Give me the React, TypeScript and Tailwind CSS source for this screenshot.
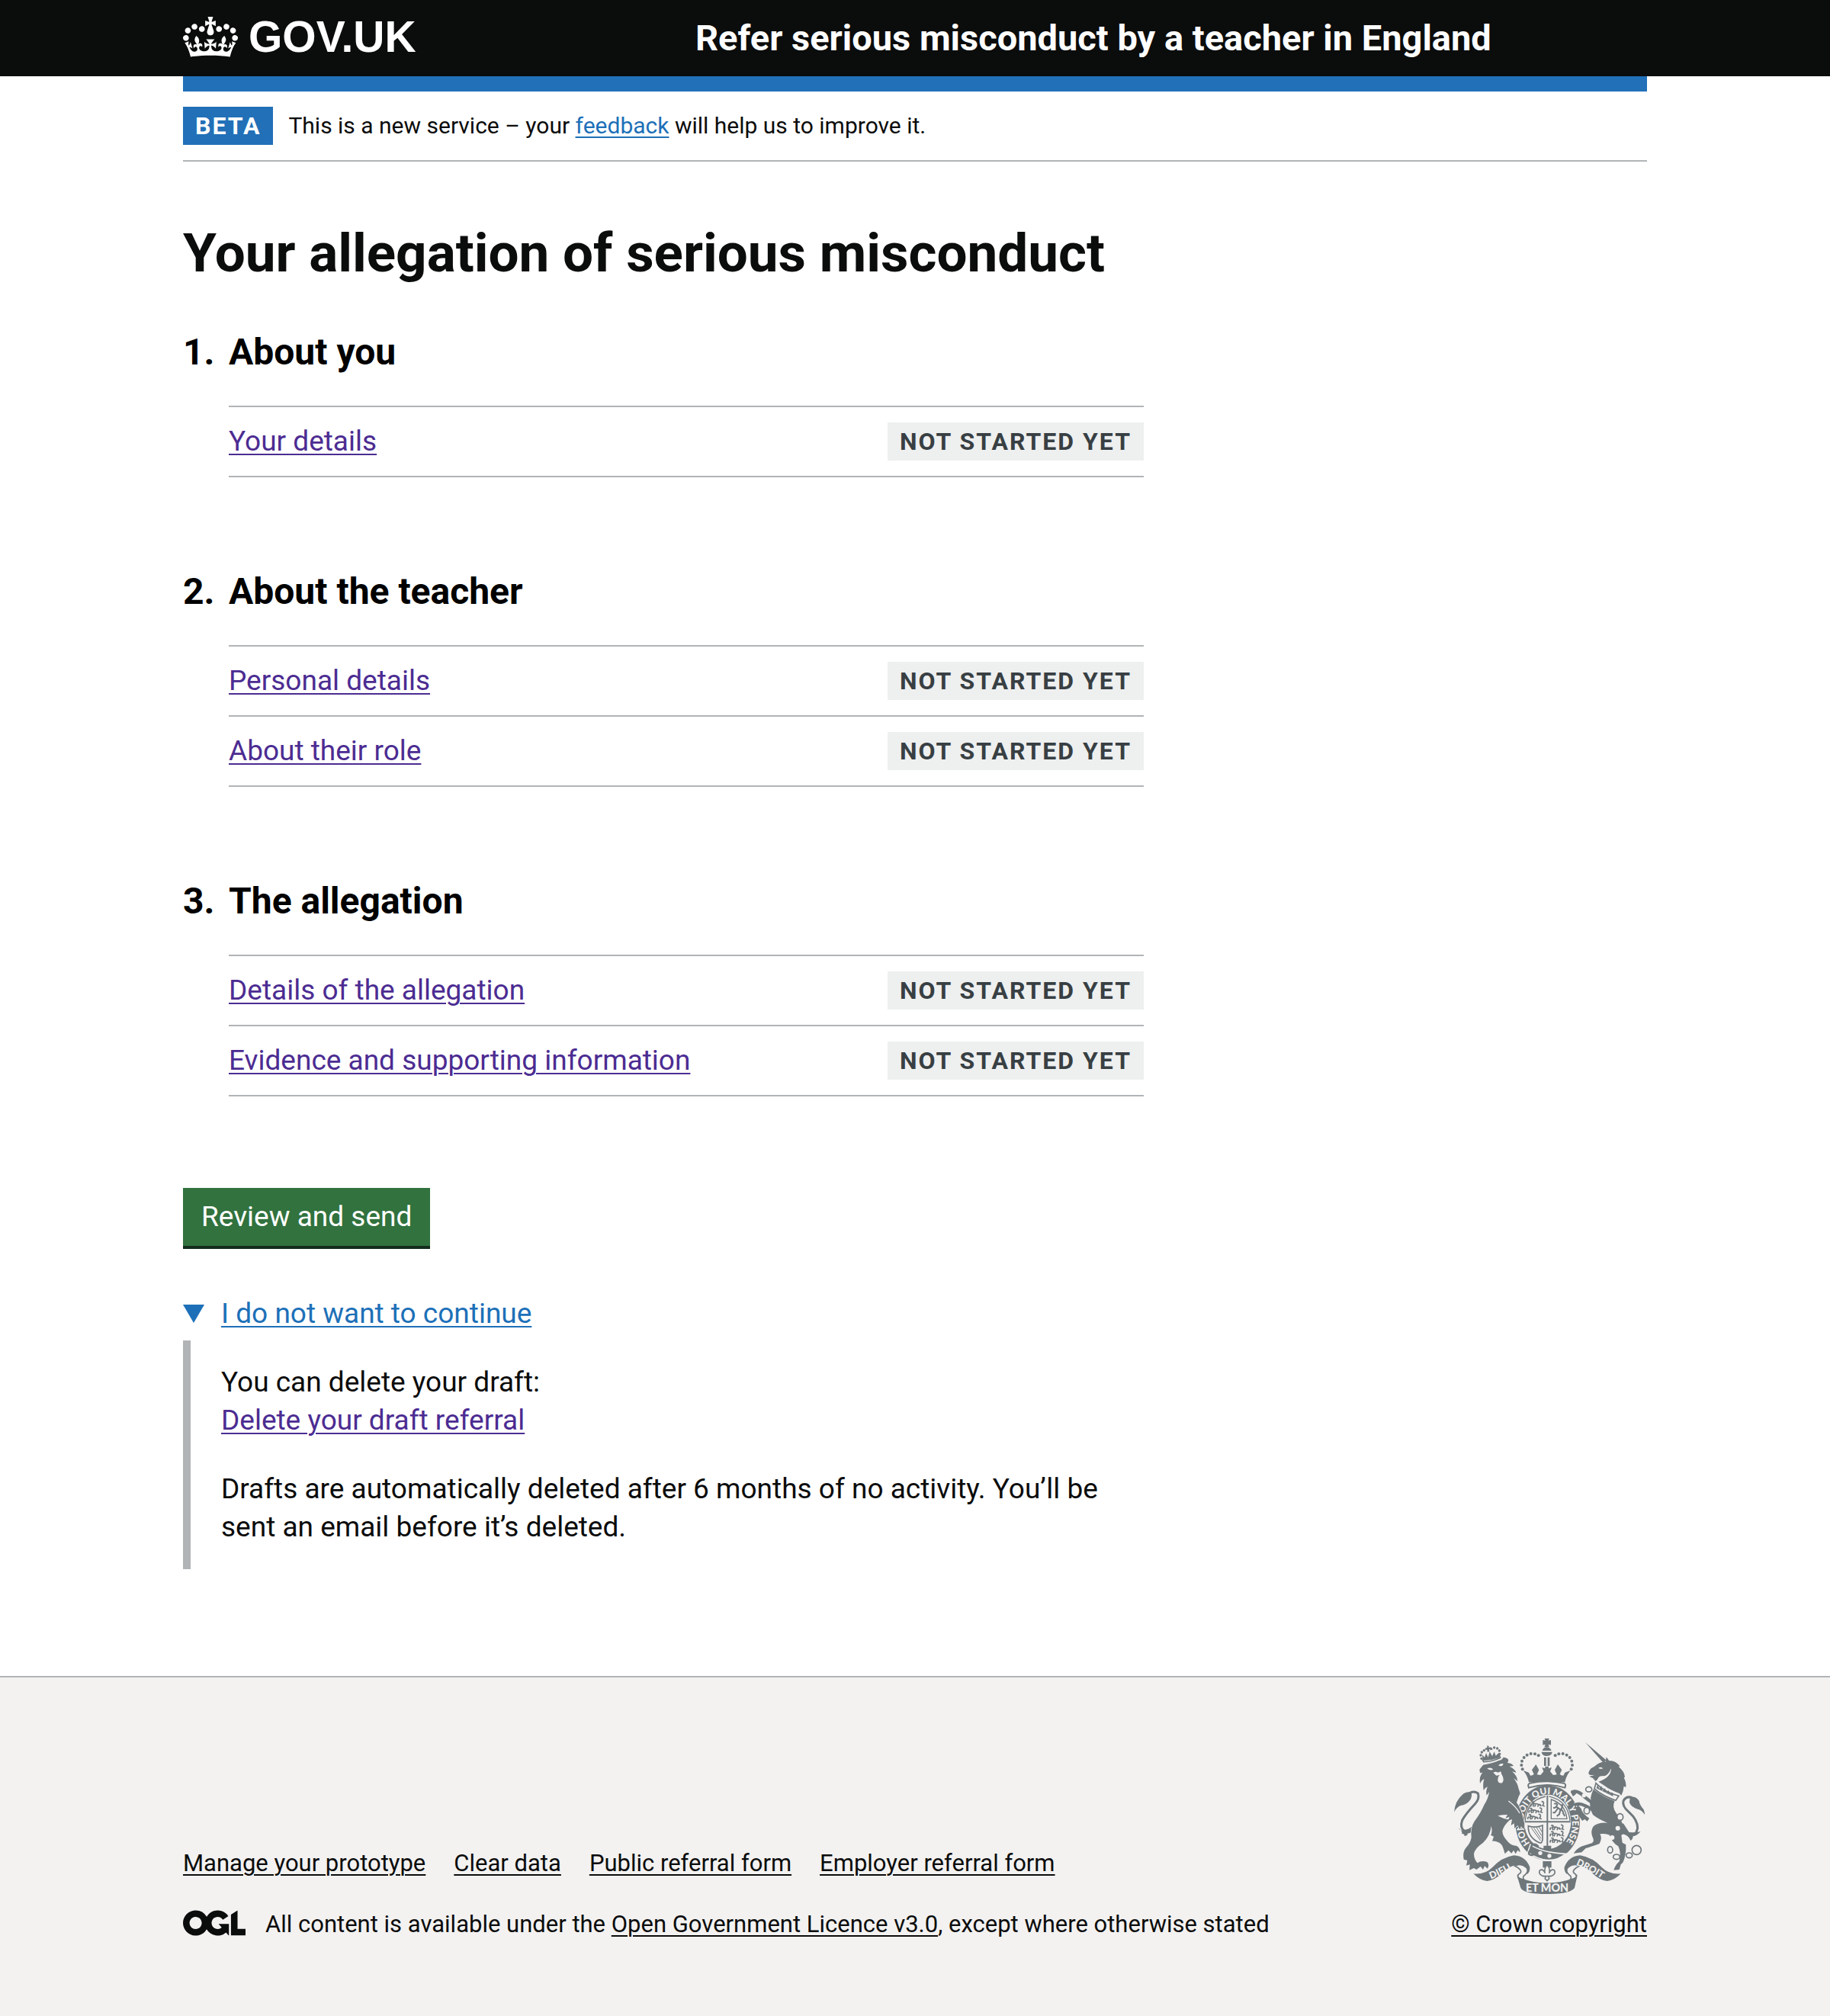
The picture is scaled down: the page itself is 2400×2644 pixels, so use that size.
import type { ReactNode } from "react";

type Task = { label: string; href: string };
type Section = { title: string; tasks: Task[] };

const sections: Section[] = [
  { title: "About you", tasks: [{ label: "Your details", href: "#your-details" }] },
  {
    title: "About the teacher",
    tasks: [
      { label: "Personal details", href: "#personal-details" },
      { label: "About their role", href: "#about-their-role" },
    ],
  },
  {
    title: "The allegation",
    tasks: [
      { label: "Details of the allegation", href: "#allegation" },
      { label: "Evidence and supporting information", href: "#evidence" },
    ],
  },
];

const footerLinks = ["Manage your prototype", "Clear data", "Public referral form", "Employer referral form"];

function Container({ children, className = "" }: { children: ReactNode; className?: string }) {
  return <div className={`mx-auto w-4/5 ${className}`}>{children}</div>;
}

function Crown() {
  return (
    <svg viewBox="0 0 132 97" className="h-[53px] w-[72px] shrink-0" fill="currentColor" aria-hidden="true">
      <path
        fillRule="evenodd"
        d="M25 30.2c3.5 1.5 7.7-.2 9.1-3.7 1.5-3.6-.2-7.8-3.9-9.2-3.6-1.4-7.6.3-9.1 3.9-1.4 3.5.3 7.5 3.9 9zM9 39.5c3.6 1.5 7.8-.2 9.2-3.7 1.5-3.6-.2-7.8-3.9-9.1-3.6-1.5-7.6.2-9.1 3.8-1.4 3.5.3 7.5 3.8 9zM4.4 57.2c3.5 1.5 7.7-.2 9.1-3.8 1.5-3.6-.2-7.7-3.9-9.1-3.5-1.5-7.6.3-9.1 3.8-1.4 3.5.3 7.6 3.9 9.1zm38.3-21.4c3.5 1.5 7.7-.2 9.1-3.8 1.5-3.6-.2-7.7-3.9-9.1-3.6-1.5-7.6.3-9.1 3.8-1.3 3.6.4 7.7 3.9 9.1zm64.4-5.6c-3.6 1.5-7.8-.2-9.1-3.7-1.5-3.6.2-7.8 3.8-9.2 3.6-1.4 7.7.3 9.2 3.9 1.3 3.5-.4 7.5-3.9 9zm15.9 9.3c-3.6 1.5-7.7-.2-9.1-3.7-1.5-3.6.2-7.8 3.7-9.1 3.6-1.5 7.7.2 9.2 3.8 1.5 3.5-.3 7.5-3.8 9zm4.7 17.7c-3.6 1.5-7.8-.2-9.2-3.8-1.5-3.6.2-7.7 3.9-9.1 3.6-1.5 7.7.3 9.2 3.8 1.3 3.5-.4 7.6-3.9 9.1zM89.3 35.8c-3.6 1.5-7.8-.2-9.2-3.8-1.4-3.6.2-7.7 3.9-9.1 3.6-1.5 7.7.3 9.2 3.8 1.4 3.6-.3 7.7-3.9 9.1zM69.7 17.7l8.9 4.7V9.3l-8.9 2.8c-.2-.3-.5-.6-.9-.9L72.4 0H59.6l3.5 11.2c-.3.3-.6.5-.9.9l-8.8-2.8v13.1l8.8-4.7c.3.3.6.7.9.9l-5 15.4v.1c-.2.8-.4 1.6-.4 2.4 0 4.1 3.1 7.5 7 8.1h.2c.3 0 .7.1 1 .1.4 0 .7 0 1-.1h.2c4-.6 7.1-4.1 7.1-8.1 0-.8-.1-1.7-.4-2.4V34l-5.1-15.4c.4-.2.7-.6 1-.9zM66 92.8c16.9 0 32.8 1.1 47.1 3.2 4-16.9 8.9-26.7 14-33.5l-9.6-3.4c1 4.9 1.1 7.2 0 10.2-1.5-1.4-3-4.3-4.2-8.7L108.6 76c2.8-2 5-3.2 7.5-3.3-4.4 9.4-10 11.9-13.6 11.2-4.3-.8-6.3-4.6-5.6-7.9 1-4.7 5.7-5.9 8-.5 4.3-8.7-3-11.4-7.6-8.8 7.1-7.2 7.9-13.5 2.1-21.1-8 6.1-8.1 12.3-4.5 20.8-4.7-5.4-12.1-2.5-9.5 6.2 3.4-5.2 7.9-2 7.2 3.1-.6 4.3-6.4 7.8-13.5 7.2-10.3-.9-10.9-8-11.2-13.8 2.5-.5 7.1 1.8 11 7.3L80.2 60c-4.1 4.4-8 5.3-12.3 5.4 1.4-4.4 8-11.6 8-11.6H55.5s6.4 7.2 7.9 11.6c-4.2-.1-8-1-12.3-5.4l1.4 16.4c3.9-5.5 8.5-7.7 10.9-7.3-.3 5.8-.9 12.8-11.1 13.8-7.2.6-12.9-2.9-13.5-7.2-.7-5 3.8-8.3 7.1-3.1 2.7-8.7-4.6-11.6-9.4-6.2 3.7-8.5 3.6-14.7-4.6-20.8-5.8 7.6-5 13.9 2.2 21.1-4.7-2.6-11.9.1-7.7 8.8 2.3-5.5 7.1-4.2 8.1.5.7 3.3-1.3 7.1-5.7 7.9-3.5.7-9-1.8-13.5-11.2 2.5.1 4.7 1.3 7.5 3.3l-4.7-15.4c-1.2 4.4-2.7 7.2-4.3 8.7-1.1-3-.9-5.3 0-10.2l-9.5 3.4c5 6.9 9.9 16.7 14 33.5 14.8-2.1 30.8-3.2 47.7-3.2z"
      />
    </svg>
  );
}

function OglLogo() {
  return (
    <svg viewBox="0 0 483.2 195.7" className="mb-1 h-[34px] w-[82px] shrink-0" fill="currentColor" role="img" aria-label="Open Government Licence">
      <path d="M421.5 142.8V.1l-50.7 32.3v161.1h112.4v-50.7zm-122.3-9.6A47.12 47.12 0 0 1 221 97.8c0-26 21.1-47.1 47.1-47.1 16.7 0 31.4 8.7 39.7 21.8l42.7-27.2A97.63 97.63 0 0 0 268.1 0c-36.5 0-68.3 20.1-85.1 49.7A98 98 0 0 0 97.8 0C43.9 0 0 43.9 0 97.8s43.9 97.8 97.8 97.8c36.5 0 68.3-20.1 85.1-49.7a97.76 97.76 0 0 0 149.6 25.4l19.4 22.2h3v-87.8h-80l24.3 27.5zM97.8 145c-26 0-47.1-21.1-47.1-47.1s21.1-47.1 47.1-47.1 47.1 21.1 47.1 47.1S123.8 145 97.8 145" />
    </svg>
  );
}

const archDots = [
  [341, 181], [337, 165], [339, 149], [347, 135], [359, 125], [374, 120], [390, 121], [404, 127],
];
const lionCrownDots = [
  [180, 139], [177, 126], [181, 114], [190, 107], [218, 101], [230, 96], [242, 99], [250, 108], [251, 121],
];

/** Small walking lion used in two quarters of the shield. */
function WalkingLion({ x, y }: { x: number; y: number }) {
  return (
    <path
      transform={`translate(${x} ${y})`}
      fill="none"
      stroke="#6f777b"
      strokeWidth="5"
      d="M4 4q4-5 8 0l-3 6q12-4 22 2q8 0 8 7m-35-9q-6 3-3 10m8-8l2 9m8-10l-4 9m14-9q2 6-3 9m9-10l6 8M42 0q10 0 8 8t-6 8q8 0 10 4"
    />
  );
}

function RoyalArms() {
  const c = "#6f777b";
  const bg = "#f3f2f1";
  return (
    <svg viewBox="66 60 762 612" className="h-[204px] w-[254px]" fill={c} aria-hidden="true">
      <defs>
        <path id="garter" d="M371 472A97 113 0 1 1 502 479" />
        <path id="dieu" d="M217 613Q268 594 318 562" />
        <path id="droit" d="M551 557Q608 580 664 620" />
        <g id="ribbonEnd">
          <path d="M148 592Q195 596 222 568Q258 528 308 520Q352 522 370 566Q372 582 360 594Q350 556 318 558Q286 562 258 592Q232 618 202 621Q172 618 148 592Z" />
          <path fill={bg} stroke={c} strokeWidth="5" d="M311 562Q334 548 357 568Q368 584 350 598Q340 604 346 614L330 616Q314 600 334 588Q340 576 311 562Z" />
        </g>
      </defs>

      {/* garter and shield */}
      <ellipse cx="440" cy="392" rx="127" ry="148" />
      <ellipse cx="440" cy="388" rx="92" ry="107" fill={bg} />
      <path fill="none" stroke={c} strokeWidth="4" d="M352 384Q358 304 432 288M446 288Q520 304 528 384M454 300Q510 318 516 376H454Z" />
      <path d="M436 284h6v200h-6zM350 385h180v6h-180zM424 482h30v14h-30z" />
      <WalkingLion x={374} y={308} />
      <WalkingLion x={366} y={333} />
      <WalkingLion x={362} y={358} />
      <WalkingLion x={450} y={400} />
      <WalkingLion x={450} y={425} />
      <WalkingLion x={450} y={450} />
      <path fill="none" stroke={c} strokeWidth="6" d="M466 318q8-6 12 2l-4 8 16 12q12 2 12 18M476 330l-14 4M480 336l-12 16h-8M490 342l-4 16-10 8M500 352l8 14M492 340q10-14 4-22" />
      <path fill="none" stroke={c} strokeWidth="5" d="M364 404Q392 414 420 402V458Q418 474 408 470Q362 450 364 404Z" />
      <path fill="none" stroke={c} strokeWidth="3" d="M376 412L412 462M386 412L414 454M396 410L416 442M406 408L418 428" />
      <text fill={bg} fontFamily="Lato, sans-serif" fontWeight="900" fontSize="36">
        <textPath href="#garter">HONI SOIT QUI MAL Y PENSE</textPath>
      </text>
      <path stroke={bg} strokeWidth="5" d="M372 478Q420 510 510 514Q470 548 420 536Q390 528 362 508Z" />
      <path fill="none" stroke={c} strokeWidth="7" d="M404 486Q392 470 378 480Q370 490 380 498Q364 500 366 514Q376 524 388 514" />
      <circle cx="411" cy="511" r="8" fill={bg} />
      <circle cx="447" cy="522" r="8" fill={bg} />

      {/* lion */}
      <path fill="none" stroke={c} strokeWidth="9" d="M132 275Q150 264 166 276Q174 296 154 318Q118 356 104 382Q94 412 112 424Q134 424 160 396L184 364" />
      <path d="M72 350Q76 306 104 282Q118 268 140 272Q144 290 134 304Q120 322 98 324Q82 330 72 350Z" />
      <path d="M88 412Q100 430 124 420Q144 414 156 404Q150 430 124 434Q130 440 112 444Q116 436 102 434Q108 428 88 412Z" />
      <path
        stroke={bg}
        strokeWidth="4"
        paintOrder="stroke"
        d="M172 182L188 162L258 144L266 134Q284 136 286 146L282 156Q300 158 306 168L290 170Q312 180 316 194L300 190Q320 206 322 228L306 216Q322 236 326 258L332 276Q324 290 318 312Q338 340 346 384Q352 400 346 418L336 406L330 418L322 402L310 414L308 394L296 402L300 378L284 384L290 368L274 374L282 360Q262 360 244 364Q268 378 292 380Q268 400 262 424Q262 444 282 464Q294 480 316 482Q332 488 332 508L322 500L314 514L306 500L298 512L286 500L272 514L266 494Q262 478 250 470Q232 462 222 464L228 446L216 440Q224 428 218 404Q214 444 186 470Q152 494 150 514Q150 536 164 550Q180 538 202 546Q212 556 204 572L192 562L186 576L176 564L160 576L150 570L132 578L134 556L120 560L124 540L110 536Q104 506 120 488Q136 472 140 450Q136 410 152 386Q178 352 190 322Q206 298 210 270L200 284Q196 266 204 250Q194 254 188 264Q184 240 190 220Q180 224 174 238Q170 208 184 194L174 196Z"
      />
      <path fill={bg} d="M202 178Q216 172 226 182Q212 188 202 178ZM246 166Q256 156 266 160Q262 174 246 166ZM226 194Q236 188 244 194L256 190Q258 202 262 206Q270 222 262 234Q248 240 244 226Q244 208 252 204L238 206Z" />
      <path fill="none" stroke={bg} strokeWidth="4" d="M184 162Q224 158 262 138M286 306Q316 328 330 354" />
      <path fill={bg} stroke={c} strokeWidth="5" d="M188 152Q222 152 254 136L250 126Q222 142 184 144Z" />
      <path d="M186 146L182 124L192 134L198 118L206 134L212 112L222 130L230 112L236 128L248 116L250 136Q218 148 186 146ZM202 88l7 2-1 6 8-2 1 8-7 0 1 10-8 1-1-9-7 1-1-7 8-2z" />
      {lionCrownDots.map(([x, y]) => (
        <circle key={`${x}-${y}`} cx={x} cy={y} r="5" />
      ))}

      {/* unicorn */}
      <path d="M588 75L670 145L661 158Z" />
      <path d="M671 133L682 148Q704 144 724 168L720 172Q742 190 744 212L740 214Q750 234 748 252L740 248Q738 270 730 284L722 276Q684 262 664 246Q652 238 640 230Q690 214 690 178Q676 210 658 208Q640 206 636 222L628 228L618 216L604 210L624 204L608 204Q598 200 602 192Q608 176 622 172Q646 150 668 152Z" />
      <path fill={bg} d="M640 176Q650 170 658 178Q648 182 640 176Z" />
      <path fill={bg} stroke={c} strokeWidth="5" d="M630 236Q664 272 720 286L708 304Q656 286 624 258Z" />
      <path d="M632 256l4-14 8 16 8-12 4 20 10-10 4 16 10-8 4 14 12-6 2 16z" />
      <path d="M620 260Q658 290 704 306Q692 330 710 354Q732 378 744 424Q740 438 730 440L734 470L748 478Q750 520 736 548L728 556L722 576L700 578Q706 558 722 544Q730 510 718 484Q692 468 684 440Q668 432 646 436Q656 452 644 474Q610 486 590 492L574 508L542 512Q556 492 576 484L614 472Q626 462 616 446Q608 424 620 406Q636 390 676 392Q640 378 618 360Q602 330 608 300Q612 276 620 260Z" />
      <path fill="none" stroke={bg} strokeWidth="19" d="M530 276Q548 260 572 278Q592 296 606 306M548 322Q566 312 586 324" />
      <path fill="none" stroke={c} strokeWidth="13" d="M534 272Q550 262 572 278Q596 300 612 310M544 322Q566 312 586 324Q602 330 614 340" />
      <path d="M530 270L548 262L552 278L540 288ZM558 320L572 336Q576 356 604 374L596 386L586 378L576 384L560 360L548 352Z" />
      <path fill="none" stroke={c} strokeWidth="9" d="M772 292Q748 286 738 306Q732 326 760 350Q794 380 794 412Q788 446 762 440L734 396" />
      <path d="M764 290Q790 286 800 306Q802 322 818 340Q822 350 822 360Q810 340 794 338Q770 332 762 312ZM730 396Q744 432 776 430Q792 430 806 426Q790 444 776 444Q776 456 766 462Q760 446 748 440L732 434Z" />
      <g fill={bg} stroke={c} strokeWidth="5">
        <ellipse cx="602" cy="260" rx="12" ry="10" />
        <ellipse cx="594" cy="344" rx="11" ry="13" />
        <ellipse cx="725" cy="369" rx="12" ry="13" />
        <ellipse cx="686" cy="498" rx="10" ry="13" />
        <ellipse cx="711" cy="526" rx="13" ry="10" />
        <ellipse cx="761" cy="520" rx="12" ry="10" />
        <circle cx="790" cy="499" r="18" />
      </g>
      <g fill={bg}>
        <circle cx="583" cy="284" r="8" />
        <circle cx="716" cy="413" r="9" />
        <circle cx="694" cy="450" r="9" />
      </g>

      {/* crown */}
      <path d="M421 66l10 2-3-8h18l-3 8 10-2v20l-10-3 4 11h-20l4-11-10 3zM419 108q4-13 18-14 14 1 18 14zM416 113h42q-2 16-21 16t-21-16zM426 134h8v34h-8zM440 134h8v34h-8z" />
      {archDots.map(([x, y]) => (
        <g key={`${x}-${y}`}>
          <circle cx={x} cy={y} r="6" />
          <circle cx={874 - x} cy={y} r="6" />
        </g>
      ))}
      <path d="M344 186L366 194L372 206Q382 206 386 200L378 184L394 162L406 184L398 202L412 204L424 190L418 174L430 178V170H444V178L456 174L450 190L462 204L476 202L468 184L480 162L496 184L488 200Q492 206 502 206L508 194L530 186Q512 208 508 232H366Q362 208 344 186Z" />
      <path fill={bg} stroke={c} strokeWidth="6" d="M370 236Q437 222 504 236Q514 240 508 254Q437 232 366 254Q360 240 370 236Z" />

      {/* motto ribbon and fleur-de-lis */}
      <use href="#ribbonEnd" />
      <use href="#ribbonEnd" transform="translate(876 0) scale(-1 1)" />
      <path d="M318 594Q322 606 342 612Q390 630 438 628Q486 630 534 612Q554 606 558 594L546 648Q530 672 438 672Q346 672 334 648Z" />
      <path d="M421 543H455V568H421Z" />
      <path fill={bg} stroke={c} strokeWidth="5" d="M438 556Q452 574 446 590Q452 572 466 578Q474 592 458 600L444 602L446 612L438 620L430 612L432 602L418 600Q402 592 410 578Q424 572 430 590Q424 574 438 556ZM420 602H456" />
      <g fill={bg} fontFamily="Lato, sans-serif" fontWeight="900">
        <text fontSize="38">
          <textPath href="#dieu">DIEU</textPath>
        </text>
        <text fontSize="37">
          <textPath href="#droit">DROIT</textPath>
        </text>
        <text x="438" y="664" fontSize="43" textAnchor="middle">ET MON</text>
      </g>
    </svg>
  );
}

const underline = "underline decoration-2 underline-offset-4";

export default function App() {
  return (
    <div className="bg-white font-[Roboto,'Liberation_Sans',sans-serif] text-[37px] leading-[50px] text-[#0b0c0c]">
      <header className="bg-[#0b0c0c] text-white">
        <Container className="flex h-[100px] items-center">
          <div className="w-[35%]">
            <a href="#home" className="inline-flex items-center gap-[14px] pb-1 align-top">
              <Crown />
              <span className="font-['Liberation_Sans',sans-serif] text-[57px] leading-[60px] font-bold">GOV.UK</span>
            </a>
          </div>
          <a href="#service" className="text-[47px] leading-[60px] font-bold">
            Refer serious misconduct by a teacher in England
          </a>
        </Container>
      </header>

      <Container>
        <div className="h-5 bg-[#2170b8]" />
        <div className="flex items-center gap-5 border-b-2 border-[#b1b4b6] py-5">
          <strong className="bg-[#2170b8] px-4 text-[32px] tracking-[2px] text-white">BETA</strong>
          <p className="text-[30px]">
            This is a new service – your{" "}
            <a href="#feedback" className={`text-[#1d70b8] ${underline}`}>feedback</a> will help us to improve it.
          </p>
        </div>

        <main className="w-[1260px] max-w-full pt-20 pb-[140px]">
          <h1 className="mb-[60px] text-[71px] leading-[80px] font-bold">Your allegation of serious misconduct</h1>

          <ol>
            {sections.map((section, index) => (
              <li key={section.title} className="mb-[120px]">
                <h2 className="mb-10 flex text-[48px] leading-[60px] font-bold text-black">
                  <span className="w-[60px] shrink-0">{index + 1}.</span>
                  {section.title}
                </h2>
                <ul className="ml-[60px] border-t-2 border-[#b1b4b6]">
                  {section.tasks.map((task) => (
                    <li key={task.label} className="flex items-center justify-between border-b-2 border-[#b1b4b6] py-5">
                      <a href={task.href} className={`text-[#4c2c92] ${underline}`}>{task.label}</a>
                      <strong className="bg-[#eeefef] px-4 text-[32px] tracking-[2px] text-[#383f43]">NOT STARTED YET</strong>
                    </li>
                  ))}
                </ul>
              </li>
            ))}
          </ol>

          <button type="button" className="block h-20 border-b-4 border-[#132d1d] bg-[#31723e] px-6 text-white">
            Review and send
          </button>

          <details open className="mt-[60px]">
            <summary className="flex list-none items-center gap-[22px] text-[#1d70b8]">
              <svg viewBox="0 0 28 24" className="h-6 w-7" fill="currentColor" aria-hidden="true">
                <path d="M0 0h28L14 24z" />
              </svg>
              <span className={underline}>I do not want to continue</span>
            </summary>
            <div className="mt-[10px] border-l-[10px] border-[#b1b4b6] py-[30px] pl-10">
              <p className="mb-10">
                You can delete your draft:
                <br />
                <a href="#delete" className={`text-[#4c2c92] ${underline}`}>Delete your draft referral</a>
              </p>
              <p>Drafts are automatically deleted after 6 months of no activity. You’ll be sent an email before it’s deleted.</p>
            </div>
          </details>
        </main>
      </Container>

      <footer className="border-t-2 border-[#b1b4b6] bg-[#f3f2f1] pt-20 pb-[100px] text-[31px] leading-10">
        <Container className="flex items-end justify-between">
          <div>
            <ul className="mb-10 flex gap-[37px]">
              {footerLinks.map((label) => (
                <li key={label}>
                  <a href="#footer" className={underline}>{label}</a>
                </li>
              ))}
            </ul>
            <div className="flex items-center gap-[26px]">
              <OglLogo />
              <span>
                All content is available under the{" "}
                <a href="#licence" className={underline}>Open Government Licence v3.0</a>, except where otherwise stated
              </span>
            </div>
          </div>
          <a href="#copyright" className={`flex flex-col items-center gap-5 ${underline}`}>
            <RoyalArms />
            <span>© Crown copyright</span>
          </a>
        </Container>
      </footer>
    </div>
  );
}
